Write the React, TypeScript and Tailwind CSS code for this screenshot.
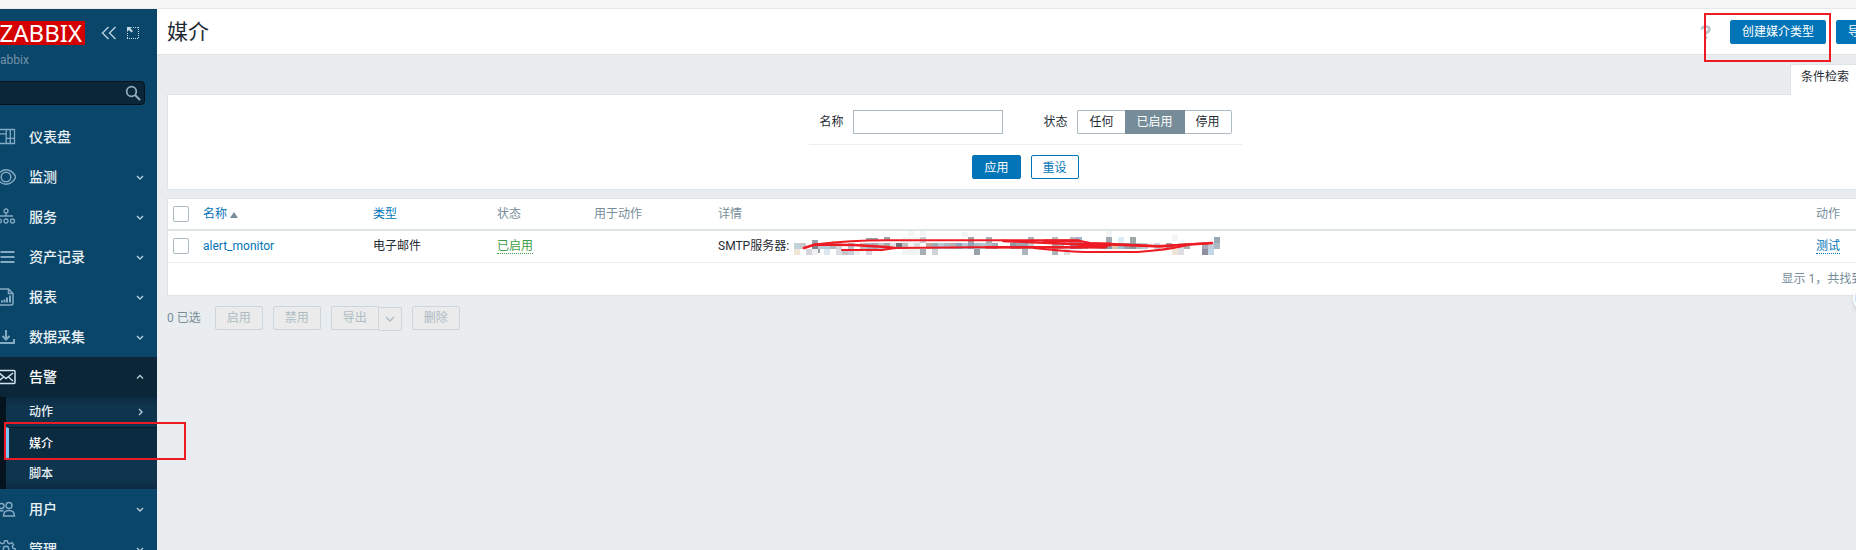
import React from "react";

const strokeProps = {
  fill: "none",
  stroke: "currentColor",
  strokeWidth: 1.3,
} as const;

const icons: Record<string, React.ReactNode> = {
  dashboard: (
    <g {...strokeProps}>
      <path d="M.5 2.500h18v14H.5z M10.200 2.500v14 M.5 6.800h9.700 M14.300 2.500v14 M10.200 11.300h8.300" />
    </g>
  ),
  eye: (
    <g {...strokeProps} strokeWidth={1.500}>
      <path d="M0 10C3 5 6.500 2.800 10 2.800S17.500 5.500 19.800 10C17.500 14.500 13.500 17.200 10 17.200S3 15 0 10z" />
      <circle cx="10" cy="10" r="4.800" />
    </g>
  ),
  services: (
    <g {...strokeProps}>
      <circle cx="10" cy="4" r="2" />
      <circle cx="3.500" cy="14" r="2" />
      <circle cx="10" cy="14" r="2" />
      <circle cx="16.500" cy="14" r="2" />
      <path d="M10 6v3 M3 9h14" />
    </g>
  ),
  list: (
    <g {...strokeProps} strokeWidth={2}>
      <path d="M4.500 5h14 M4.500 10h14 M4.500 15h14" />
    </g>
  ),
  report: (
    <g {...strokeProps} strokeWidth={1.5}>
      <path d="M3 2h9.500l4.500 4.500V16a2 2 0 0 1-2 2H5a2 2 0 0 1-2-2z M12.500 2v4.500H17" />
      <path d="M6 15.500v-2 M8.500 15.500v-3 M11 15.500v-5 M14 15.500v-7" strokeWidth="2" />
    </g>
  ),
  download: (
    <g {...strokeProps} strokeWidth={2}>
      <path d="M10 3v9 M6.500 9l3.500 3.500L13.500 9 M2 12v4h16v-4" />
    </g>
  ),
  mail: (
    <g {...strokeProps} strokeWidth={1.5}>
      <rect x="1" y="3.500" width="18" height="13" rx="1" />
      <path d="M3 6l7 5.500L17 6 M3 14l4.500-4 M17 14l-4.500-4" />
    </g>
  ),
  users: (
    <g {...strokeProps} strokeWidth={1.4}>
      <circle cx="13" cy="6.500" r="3" />
      <circle cx="5.500" cy="7" r="2.500" />
      <path d="M7.500 17c0-4 2-5.500 5.500-5.500s5.500 1.500 5.500 5.500z M1 16c0-3 1.500-4.500 4.500-4.500l2 .5" />
    </g>
  ),
  gear: (
    <g {...strokeProps} strokeWidth={1.4} strokeLinejoin="round">
      <circle cx="10" cy="10" r="2.700" />
      <path d="M8.600 1.800h2.800l.5 2.300 1.700.7 2-1.300 2 2-1.300 2 .7 1.700 2.200.4v2.800l-2.200.5-.7 1.700 1.300 2-2 2-2-1.300-1.700.7-.5 2.200H8.600l-.5-2.200-1.700-.7-2 1.300-2-2 1.300-2-.7-1.700-2.200-.5V9.600L3 9.200l.7-1.700-1.300-2 2-2 2 1.300 1.700-.7z" />
    </g>
  ),
};

function Chevron({ dir }: { dir: "down" | "up" | "right" }) {
  const d = { down: "M1 3l3 3 3-3", up: "M1 5.500l3-3 3 3", right: "M3 1l3 3-3 3" }[dir];
  return (
    <svg viewBox="0 0 8 8" className="h-2 w-2 text-[#b7ccd9]" aria-hidden="true">
      <path d={d} fill="none" stroke="currentColor" strokeWidth="1.4" />
    </svg>
  );
}

function MenuItem({ icon, label, open, leaf }: { icon: string; label: string; open?: boolean; leaf?: boolean }) {
  return (
    <a
      href="#"
      className={
        "flex h-10 items-center pr-[13px] text-sm font-medium " +
        (open ? "bg-[#0a2637] text-white" : "text-[#e9f1f5]")
      }
    >
      <svg
        viewBox="0 0 20 20"
        className={"-ml-1 h-5 w-5 shrink-0 " + (open ? "text-[#cfe3ef]" : "text-[#85abc4]")}
        aria-hidden="true"
      >
        {icons[icon]}
      </svg>
      <span className="ml-[13px] flex-1">{label}</span>
      {!leaf && <Chevron dir={open ? "up" : "down"} />}
    </a>
  );
}

function Sidebar() {
  return (
    <aside className="w-[157px] shrink-0 overflow-hidden bg-[#0a466a]">
      <div className="flex items-center pt-3">
        <div className="-ml-2 flex h-6 w-[93px] shrink-0 items-center justify-end bg-[#d40000] pr-[3px] font-['Noto_Sans',sans-serif] text-2xl leading-6 text-white">
          ZABBIX
        </div>
        <button type="button" aria-label="收起" className="ml-4 text-[#b7d0df]">
          <svg viewBox="0 0 16 14" className="h-[14px] w-4">
            <path d="M7.500 1l-6 6 6 6 M14.500 1l-6 6 6 6" fill="none" stroke="currentColor" strokeWidth="1.4" />
          </svg>
        </button>
        <button type="button" aria-label="隐藏" className="ml-[9px] text-[#c5d9e5]">
          <svg viewBox="0 0 14 14" className="h-[14px] w-[14px]">
            <path d="M7 1.500h6" fill="none" stroke="currentColor" strokeDasharray="1 1" />
            <path d="M12.500 1v12 M1.500 7v6" fill="none" stroke="currentColor" strokeDasharray="1 1" />
            <path d="M1 12.500h12" fill="none" stroke="currentColor" strokeDasharray="1 1" />
            <path d="M1 1h5L4.500 2.500l2.500 2.500-1.500 1.500L3 4 1 6z" fill="currentColor" />
          </svg>
        </button>
      </div>
      <div className="-ml-[6px] mt-[7px] text-xs leading-4 text-[#7593a8]">zabbix</div>
      <div className="-ml-2 mr-3 mt-[13px] flex h-6 items-center rounded-sm border border-[#04141f] bg-[#0a2637] pr-[3px]">
        <input type="text" aria-label="搜索" className="min-w-0 flex-1 bg-transparent px-2 text-xs text-white outline-none" />
        <button type="button" aria-label="搜索" className="text-[#8fb0c5]">
          <svg viewBox="0 0 16 16" className="h-4 w-4">
            <circle cx="6.500" cy="6.500" r="4.800" fill="none" stroke="currentColor" strokeWidth="1.7" />
            <path d="M10 10l5 5" stroke="currentColor" strokeWidth="2" />
          </svg>
        </button>
      </div>
      <nav className="mt-3">
        <MenuItem icon="dashboard" label="仪表盘" leaf />
        <MenuItem icon="eye" label="监测" />
        <MenuItem icon="services" label="服务" />
        <MenuItem icon="list" label="资产记录" />
        <MenuItem icon="report" label="报表" />
        <MenuItem icon="download" label="数据采集" />
        <MenuItem icon="mail" label="告警" open />
        <div className="border-l-[6px] border-[#04131d] bg-[#0f344e] text-xs font-medium text-[#e9f1f5]">
          <a href="#" className="flex h-[30px] items-center bg-linear-to-b from-[#0c2b41] to-[#0f344e] to-30% pl-[23px] pr-[13px]">
            <span className="flex-1">动作</span>
            <Chevron dir="right" />
          </a>
          <a href="#" className="flex h-8 items-center border-l-[3px] border-t border-l-[#7cc4f5] border-t-[#071d2b] bg-[#0a2b40] pl-5 text-white">
            媒介
          </a>
          <a href="#" className="flex h-[30px] items-center bg-linear-to-b from-[#0f344e] from-70% to-[#0c2b41] pl-[23px]">
            脚本
          </a>
        </div>
        <MenuItem icon="users" label="用户" />
        <MenuItem icon="gear" label="管理" />
      </nav>
    </aside>
  );
}

const primaryButton = "h-6 rounded-xs border border-[#0275b8] bg-[#0275b8] px-[11px] text-xs leading-5 text-white";
const disabledButton = "h-6 border border-[#ccd5d9] bg-[#ebebeb] px-[11px] text-xs leading-5 text-[#acbbc2]";

function Filter() {
  return (
    <section>
      <div className="flex justify-end">
        <a
          href="#"
          className="relative z-10 -mb-px flex h-[31px] w-[94px] items-center border border-b-0 border-[#dfe4e7] bg-white pb-[6px] pl-[10px] text-xs text-[#1f2c33]"
        >
          条件检索
        </a>
      </div>
      <form className="flex flex-col items-center border border-[#dfe4e7] bg-white pb-[10px] pt-[15px]">
        <div className="flex items-center border-b border-[#ebeef0] px-[10px] pb-[10px] text-xs">
          <label htmlFor="filter-name">名称</label>
          <input id="filter-name" type="text" className="ml-[10px] h-6 w-[150px] border border-[#acbbc2] bg-white px-1 outline-none" />
          <fieldset className="ml-10 flex items-center">
            <legend className="float-left mr-[10px]">状态</legend>
            <div className="flex h-6 leading-[22px]">
              <label className="rounded-l-xs border border-r-0 border-[#acbbc2] px-[11px]">
                <input type="radio" name="status" className="sr-only" />
                任何
              </label>
              <label className="border border-[#768d99] bg-[#768d99] px-[11px] text-white">
                <input type="radio" name="status" className="sr-only" defaultChecked />
                已启用
              </label>
              <label className="rounded-r-xs border border-l-0 border-[#acbbc2] px-[11px]">
                <input type="radio" name="status" className="sr-only" />
                停用
              </label>
            </div>
          </fieldset>
        </div>
        <div className="mt-[10px] flex gap-[10px]">
          <button type="button" className={primaryButton + " pt-[2px]"}>应用</button>
          <button type="button" className="h-6 rounded-xs border border-[#0275b8] bg-white px-[11px] pt-[2px] text-xs leading-5 text-[#0275b8]">
            重设
          </button>
        </div>
      </form>
    </section>
  );
}

/* Mosaic cells over the server address: [column, row, colour], 6px each. */
const mosaic: [number, number, string][] = [
  [0, 1, "#c3d2da"], [0, 2, "#efe6d6"], [1, 1, "#c9c9cc"], [2, 2, "#d6d6da"], [3, 1, "#85828a"], [3, 2, "#eef0f1"],
  [4, 1, "#b9cad6"], [5, 1, "#b7c8d8"], [5, 2, "#dce6ef"], [6, 1, "#b0b8bf"], [7, 2, "#dadde3"], [7, 1, "#d4d3da"],
  [8, 2, "#c5c4cb"], [9, 1, "#b8c2cc"], [9, 2, "#c7cdd5"], [10, 2, "#eceef0"], [11, 1, "#c8b8b8"], [12, 1, "#aeb3bb"],
  [12, 2, "#dcd5db"], [13, 1, "#b0a8b4"], [14, 1, "#c4cad0"], [15, 1, "#aaa6ad"], [16, 1, "#e2e4e8"],
  [17, 1, "#77727b"], [18, 1, "#bdbabf"], [19, 2, "#f0f1f2"], [21, 0, "#c9cdd1"], [20, 1, "#d7dbe0"],
  [21, 2, "#a6afb5"], [22, 1, "#c2a79f"], [23, 1, "#9dabba"], [24, 1, "#b8cad8"], [25, 1, "#a9b9c8"], [26, 1, "#b7aeb0"],
  [23, 2, "#cfd2d6"], [27, 1, "#90a8bd"], [28, 1, "#b5c7d4"], [29, 1, "#8ca2b7"], [30, 1, "#aebcc6"], [30, 2, "#98a3ac"],
  [29, 0, "#a5a4a8"], [32, 0, "#a6b2bb"], [31, 1, "#b9c5ce"], [32, 1, "#b3b9c2"], [33, 1, "#a0abb6"],
  [36, 1, "#8799a5"], [37, 1, "#a1a0aa"], [38, 1, "#99a5b0"], [38, 2, "#a8b5bf"], [39, 0, "#aab3ba"], [39, 1, "#c7cbd0"],
  [43, 0, "#b5babd"], [43, 1, "#b1a2a2"], [43, 2, "#adb3b6"], [44, 1, "#b5bec4"], [45, 2, "#dadee2"], [46, 1, "#8e86a2"],
  [46, 0, "#b6bfc9"], [47, 0, "#a5b4c4"], [47, 1, "#8498b0"], [48, 1, "#c3b5b5"], [50, 1, "#d2e2ec"], [51, 1, "#a0b1c2"],
  [52, 0, "#9fa9b1"], [52, 1, "#8b9eb0"], [53, 1, "#d9c2aa"], [54, 0, "#dcebf4"], [54, 1, "#9cc0d4"],
  [55, 1, "#98a3aa"], [56, 0, "#a0aaa9"], [56, 1, "#8b989d"], [57, 1, "#b2bec4"], [58, 1, "#c9d0d5"],
  [60, 1, "#c8d3da"], [62, 1, "#a5a5aa"], [63, 2, "#f0e4d4"], [64, 1, "#d4dfe7"], [64, 2, "#dcdfe2"], [65, 1, "#aeb0b1"],
  [68, 2, "#8f8e9f"], [69, 2, "#c2d6ea"], [68, 1, "#a5aab8"], [69, 1, "#c3ccd6"], [70, 0, "#9ba9b5"], [70, 1, "#adbac3"],
];

function Redacted() {
  return (
    <svg viewBox="0 0 432 30" className="-my-2 h-[30px] w-[432px] shrink-0" aria-hidden="true">
      <g fill="#f3f4f5">
        <path d="M108 6h18v18h-18z M114 0h6v5h-6z M126 0h6v5h-6z M168 1h6v5h-6z M312 0h6v6h-6z M378 4h6v6h-6z" />
      </g>
      {mosaic.map(([c, r, colour], i) => (
        <rect key={i} x={c * 6} y={6 + r * 6} width="6" height="6" fill={colour} />
      ))}
      <g fill="#98a2aa">
        <path d="M18 9h6v4h-6z M72 7h12v3H72z M90 6h6v4h-6z M24 18h2v4h-2z" />
      </g>
      <g fill="none" stroke="#ed1c24" strokeWidth="2" strokeLinecap="round" strokeLinejoin="round">
        <path d="M10 17L21 13.500L60 14L92 16L101 17" strokeWidth="2.500" />
        <path d="M21 13.500Q58 9.300 91 9.300H283L296 12L364 15L418 12" />
        <path d="M48 19H88L101 17L180 16.300H312" />
        <path d="M192 16.300H312" strokeWidth="2.500" />
        <path d="M209 10L288 13.500H317L366 15.500L418 12" strokeWidth="2.500" />
        <path d="M250 10H285" strokeWidth="3" />
        <path d="M286 13.500H316" strokeWidth="4" />
        <path d="M240 17Q278 21 294 21H344Q372 19 392 14.500" />
      </g>
    </svg>
  );
}

const checkbox = "block h-4 w-4 appearance-none rounded-xs border border-[#acbbc2] bg-white";

function MediaTable() {
  return (
    <div className="mt-2 border border-[#dfe4e7] bg-white">
      <table className="w-full table-fixed border-collapse text-left text-xs">
        <colgroup>
          <col className="w-[30px]" />
          <col className="w-[170px]" />
          <col className="w-[124px]" />
          <col className="w-[97px]" />
          <col className="w-[124px]" />
          <col />
          <col className="w-[72px]" />
        </colgroup>
        <thead>
          <tr className="h-[31px] border-b-2 border-[#dfe4e7] text-[#768d99] *:px-[5px] *:font-normal">
            <th><input type="checkbox" aria-label="全选" className={checkbox} /></th>
            <th>
              <a href="#" className="inline-flex items-center gap-[3px] text-[#0275b8]">
                名称
                <svg viewBox="0 0 8 6" className="mt-[2px] h-[6px] w-2 text-[#768d99]" aria-hidden="true">
                  <path d="M4 0l4 6H0z" fill="currentColor" />
                </svg>
              </a>
            </th>
            <th><a href="#" className="text-[#0275b8]">类型</a></th>
            <th>状态</th>
            <th>用于动作</th>
            <th>详情</th>
            <th>动作</th>
          </tr>
        </thead>
        <tbody>
          <tr className="h-8 border-b border-[#ebeef0] *:px-[5px]">
            <td><input type="checkbox" aria-label="alert_monitor" className={checkbox} /></td>
            <td><a href="#" className="text-[#0275b8]">alert_monitor</a></td>
            <td>电子邮件</td>
            <td><a href="#" className="border-b border-dotted border-[#429e47] text-[#429e47]">已启用</a></td>
            <td></td>
            <td>
              <div className="flex items-center gap-[5px] whitespace-nowrap">
                SMTP服务器:
                <Redacted />
              </div>
            </td>
            <td><a href="#" className="border-b border-dotted border-[#0275b8] text-[#0275b8]">测试</a></td>
          </tr>
        </tbody>
      </table>
      <div className="flex h-8 items-center justify-end pr-[10px] text-xs text-[#768d99]">显示 1，共找到 1</div>
    </div>
  );
}

export default function App() {
  return (
    <div className="relative flex h-screen flex-col overflow-hidden bg-[#e9edf0] font-[Roboto,'Noto_Sans_CJK_SC',sans-serif] text-xs text-[#1f2c33]">
      <div className="h-[9px] shrink-0 border-b border-[#e8e8e8] bg-[#f7f7f7]" />
      <div className="flex min-h-0 flex-1">
        <Sidebar />
        <main className="-mr-[38px] min-w-0 flex-1">
          <header className="flex h-[46px] items-center border-b border-[#dfe4e7] bg-white px-[10px]">
            <h1 className="flex-1 text-[21px] leading-7">媒介</h1>
            <a href="#" aria-label="帮助" className="mr-[18px] text-[#b6c4cb]">
              <svg viewBox="0 0 12 14" className="h-[14px] w-3">
                <path d="M2 4.500Q2 1.500 5.800 1.500T9.500 4.500Q9.500 6 7.500 7T5.800 9.500" fill="none" stroke="currentColor" strokeWidth="2.600" />
                <path d="M4.300 11.200h3v2.500h-3z" fill="currentColor" />
              </svg>
            </a>
            <div className="flex gap-[10px]">
              <button type="button" className={primaryButton}>创建媒介类型</button>
              <button type="button" className={primaryButton}>导入</button>
            </div>
          </header>
          <div className="px-[10px] pt-[9px]">
            <Filter />
            <MediaTable />
            <div className="mt-[10px] flex items-start gap-[10px]">
              <span className="mr-1 leading-6 text-[#768d99]">0 已选</span>
              <button type="button" disabled className={disabledButton + " rounded-xs"}>启用</button>
              <button type="button" disabled className={disabledButton + " rounded-xs"}>禁用</button>
              <div className="flex items-start">
                <button type="button" disabled className={disabledButton + " rounded-l-xs"}>导出</button>
                <button
                  type="button"
                  disabled
                  aria-label="导出格式"
                  className="-ml-px mt-px flex h-6 w-6 items-center justify-center rounded-r-xs border border-[#ccd5d9] bg-[#ebebeb] text-[#acbbc2]"
                >
                  <svg viewBox="0 0 10 6" className="h-[6px] w-[10px]">
                    <path d="M1 1l4 4 4-4" fill="none" stroke="currentColor" strokeWidth="1.300" />
                  </svg>
                </button>
              </div>
              <button type="button" disabled className={disabledButton + " rounded-xs"}>删除</button>
            </div>
          </div>
        </main>
      </div>
      <div className="pointer-events-none absolute right-[25px] top-[13px] h-[49px] w-[127px] border-2 border-[#ed1c24]" />
      <div className="pointer-events-none absolute left-1 top-[422px] h-[38px] w-[182px] border-2 border-[#ed1c24]" />
      <div className="absolute -right-[25px] top-[284px] h-7 w-7 rounded-full border-2 border-white bg-[#bcd8fb] shadow-md" />
    </div>
  );
}
